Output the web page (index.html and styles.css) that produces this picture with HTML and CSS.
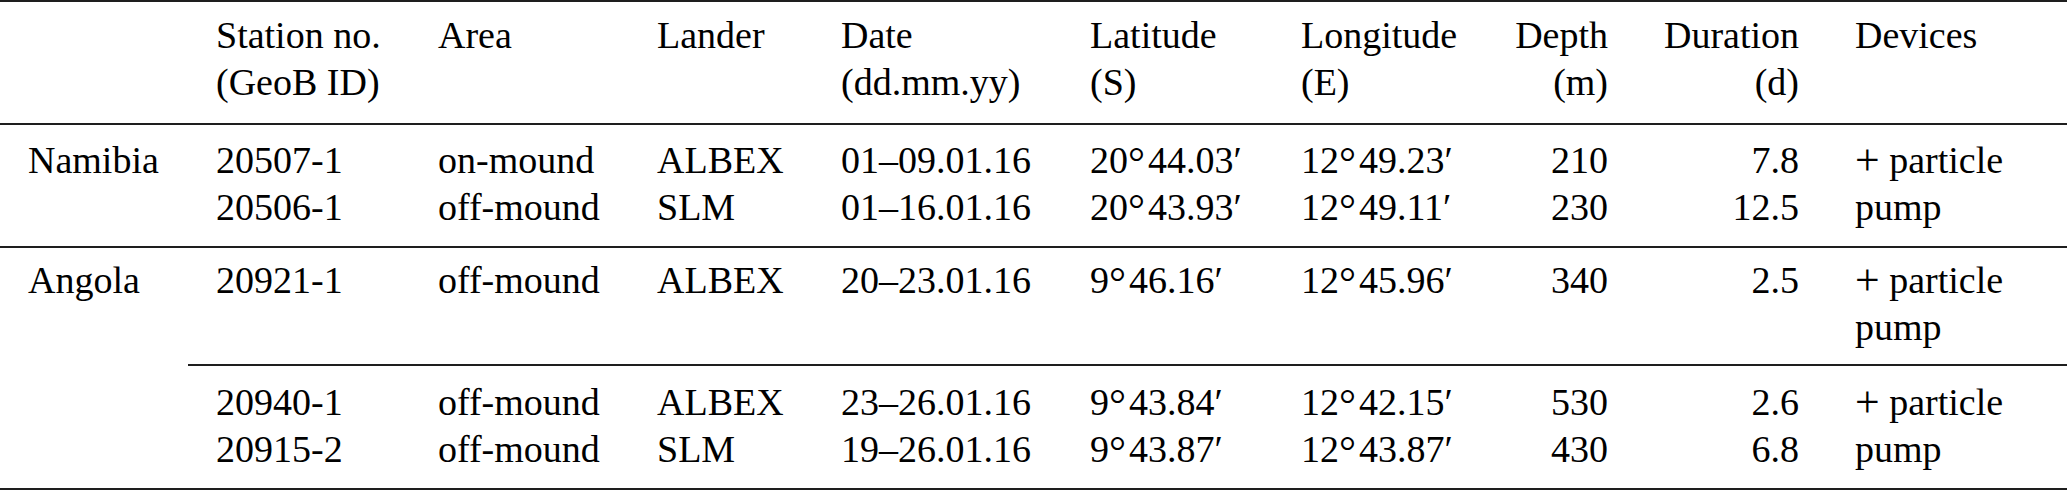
FILE: index.html
```html
<!DOCTYPE html>
<html lang="en">
<head>
  <meta charset="UTF-8" />
  <title>Lander deployments</title>
  <link rel="stylesheet" href="styles.css">
</head>
<body>

  <table class="deployments">
    <colgroup>
      <col class="c-region">
      <col class="c-station">
      <col class="c-area">
      <col class="c-lander">
      <col class="c-date">
      <col class="c-lat">
      <col class="c-lon">
      <col class="c-depth">
      <col class="c-duration">
      <col class="c-devices">
    </colgroup>
    <thead>
      <tr>
        <th></th>
        <th>Station no.<br>(GeoB ID)</th>
        <th>Area</th>
        <th>Lander</th>
        <th>Date<br>(dd.mm.yy)</th>
        <th>Latitude<br>(S)</th>
        <th>Longitude<br>(E)</th>
        <th class="num">Depth<br>(m)</th>
        <th class="num">Duration<br>(d)</th>
        <th>Devices</th>
      </tr>
    </thead>
    <tbody>
      <tr class="namibia">
        <td>Namibia</td>
        <td>20507-1<br>20506-1</td>
        <td>on-mound<br>off-mound</td>
        <td>ALBEX<br>SLM</td>
        <td>01–09.01.16<br>01–16.01.16</td>
        <td>20<span class="deg">°</span>44.03′<br>20<span class="deg">°</span>43.93′</td>
        <td>12<span class="deg">°</span>49.23′<br>12<span class="deg">°</span>49.11′</td>
        <td class="num">210<br>230</td>
        <td class="num">7.8<br>12.5</td>
        <td><span class="plus">+</span> particle<br>pump</td>
      </tr>
      <tr class="angola">
        <td rowspan="2">Angola</td>
        <td>20921-1</td>
        <td>off-mound</td>
        <td>ALBEX</td>
        <td>20–23.01.16</td>
        <td>9<span class="deg">°</span>46.16′</td>
        <td>12<span class="deg">°</span>45.96′</td>
        <td class="num">340</td>
        <td class="num">2.5</td>
        <td><span class="plus">+</span> particle<br>pump</td>
      </tr>
      <tr class="subgroup">
        <td>20940-1<br>20915-2</td>
        <td>off-mound<br>off-mound</td>
        <td>ALBEX<br>SLM</td>
        <td>23–26.01.16<br>19–26.01.16</td>
        <td>9<span class="deg">°</span>43.84′<br>9<span class="deg">°</span>43.87′</td>
        <td>12<span class="deg">°</span>42.15′<br>12<span class="deg">°</span>43.87′</td>
        <td class="num">530<br>430</td>
        <td class="num">2.6<br>6.8</td>
        <td><span class="plus">+</span> particle<br>pump</td>
      </tr>
    </tbody>
  </table>

</body>
</html>
```

FILE: styles.css
```css
html, body {
  margin: 0;
  padding: 0;
  background: white;
  color: black;
}
.deployments {
  width: 2067px;
  border-collapse: separate;
  border-spacing: 0;
  table-layout: fixed;
  font-family: "Liberation Serif", "Times New Roman", serif;
  font-size: 38px;
  line-height: 47px;
  border-top: 2px solid #1e1e1e;
  border-bottom: 2px solid #1e1e1e;
}
/* column widths taken from the text positions */
.c-region { width: 188px; }
.c-station { width: 222px; }
.c-area { width: 219px; }
.c-lander { width: 184px; }
.c-date { width: 249px; }
.c-lat { width: 211px; }
.c-lon { width: 212px; }
.c-depth { width: 151px; }
.c-duration { width: 191px; }
.c-devices { width: 240px; }

.deployments th,
.deployments td {
  padding: 12px 28px 15px;
  text-align: left;
  vertical-align: top;
  font-weight: normal;
  white-space: nowrap;
}
.deployments .num {
  text-align: right;
}
.deployments thead th {
  padding-top: 10px;
  padding-bottom: 17px;
  border-bottom: 2px solid #1e1e1e;
}
.deployments tr.angola td {
  padding-top: 9px;
  padding-bottom: 13px;
  border-top: 2px solid #1e1e1e;
}
.deployments tr.subgroup td {
  padding-top: 13px;
  padding-bottom: 15px;
  border-top: 2px solid #1e1e1e;
}
/* math-style degree sign and plus are drawn a bit larger */
.deg {
  font-size: 1.12em;
  line-height: 0;
  vertical-align: -3px;
  margin-right: 3px;
}
.plus {
  font-size: 1.15em;
  line-height: 0;
  vertical-align: -2px;
}
```
